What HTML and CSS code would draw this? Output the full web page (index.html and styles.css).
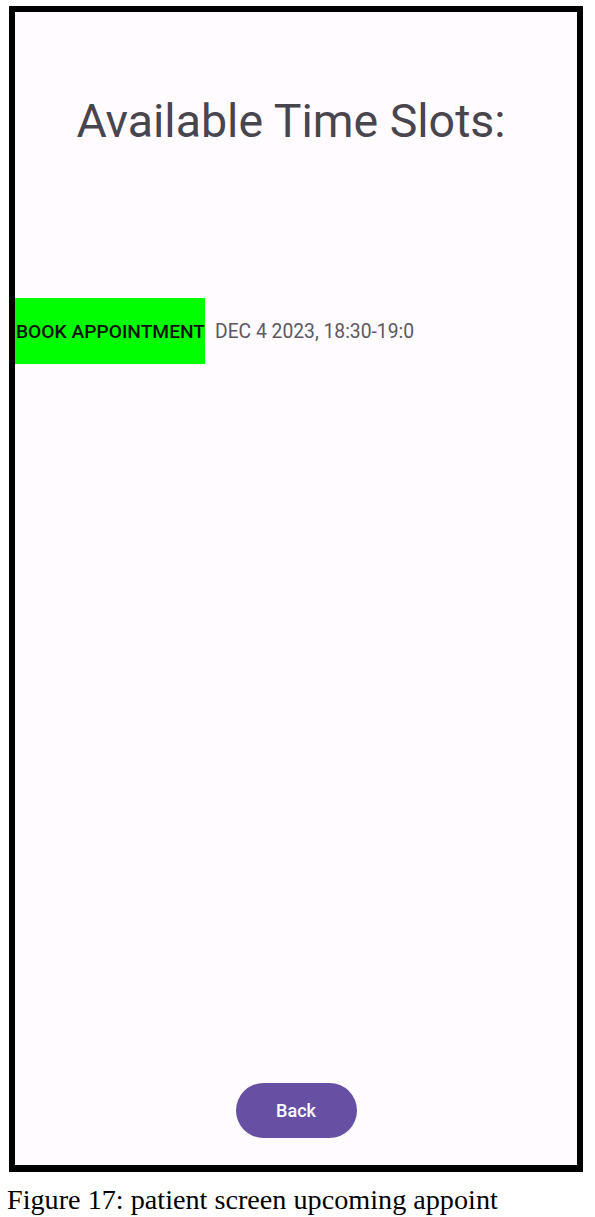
FILE: index.html
```html
<!DOCTYPE html>
<html>
<head>
<meta charset="utf-8">
<link rel="stylesheet" href="styles.css">
</head>
<body>
<div class="frame">
  <h1 class="title">Available Time Slots:</h1>
  <div class="slot-row">
    <div class="book-btn">BOOK APPOINTMENT</div>
    <div class="slot-text">DEC 4 2023, 18:30-19:0</div>
  </div>
  <div class="spacer"></div>
  <div class="back-wrap"><div class="back-btn">Back</div></div>
</div>
<p class="caption">Figure 17: patient screen upcoming appoint</p>
</body>
</html>
```
FILE: styles.css
```css
html, body {
  margin: 0;
  padding: 0;
  background: #ffffff;
}
body {
  width: 595px;
  height: 1217px;
  overflow: hidden;
}
.frame {
  box-sizing: border-box;
  margin: 6px 0 0 9px;
  width: 574px;
  height: 1166px;
  border-style: solid;
  border-color: #000;
  border-width: 6px 6px 7px 6px;
  background: #fffbfe;
  display: flex;
  flex-direction: column;
  font-family: Roboto, "Noto Sans", sans-serif;
}
.title {
  margin: 81px 0 0 0;
  padding-right: 10px;
  font-size: 46.5px;
  font-weight: 400;
  line-height: 56px;
  color: #49454f;
  text-align: center;
}
.slot-row {
  margin-top: 149px;
  display: flex;
  align-items: center;
  height: 66px;
}
.book-btn {
  width: 190px;
  height: 66px;
  background: #00ff00;
  color: #111;
  font-weight: 500;
  font-size: 19.2px;
  display: flex;
  align-items: center;
  white-space: nowrap;
  overflow: hidden;
  padding-left: 1px;
  box-sizing: border-box;
}
.slot-text {
  margin-left: 10px;
  color: #5c5862;
  font-size: 19.3px;
  white-space: nowrap;
}
.spacer {
  flex: 1;
}
.back-wrap {
  display: flex;
  justify-content: center;
  padding-bottom: 27px;
}
.back-btn {
  width: 121px;
  height: 55px;
  border-radius: 28px;
  background: #6750a4;
  color: #fff;
  font-weight: 500;
  font-size: 18px;
  display: flex;
  align-items: center;
  justify-content: center;
}
.caption {
  margin: 12px 0 0 7px;
  font-family: "Liberation Serif", "Times New Roman", serif;
  font-size: 28.2px;
  color: #000;
  white-space: nowrap;
}
```
